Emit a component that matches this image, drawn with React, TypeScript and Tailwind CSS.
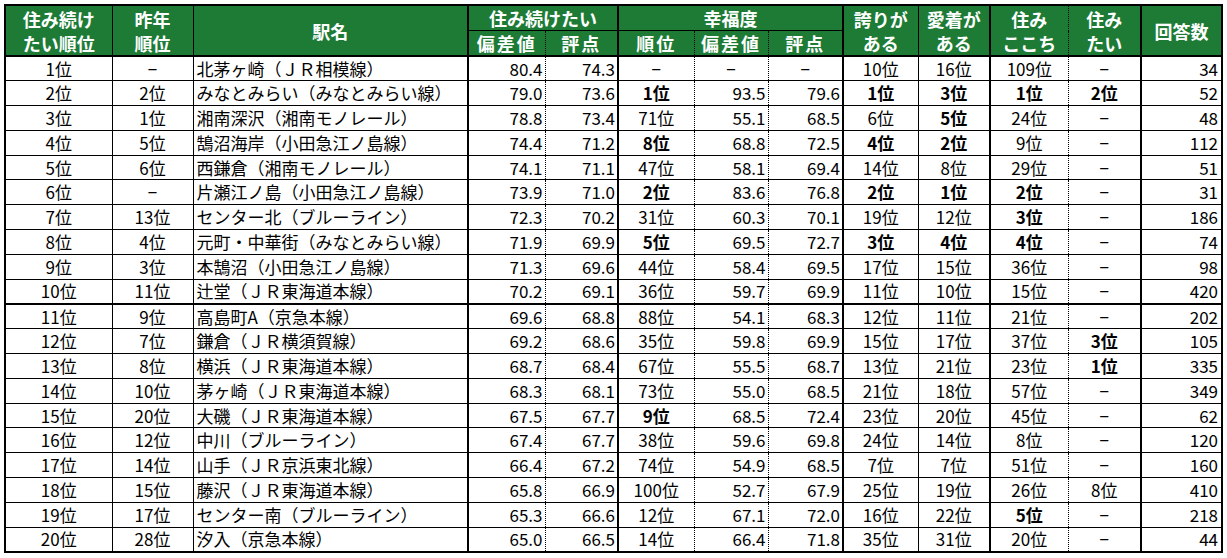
import React from 'react';

type Row = string[];

const D = '−';

// rank, last year, station, 住み続けたい(偏差値, 評点), 幸福度(順位, 偏差値, 評点), 誇り, 愛着, 住みここち, 住みたい, 回答数
const rows: Row[] = [
  ['1位', D, '北茅ヶ崎（ＪＲ相模線）', '80.4', '74.3', D, D, D, '10位', '16位', '109位', D, '34'],
  ['2位', '2位', 'みなとみらい（みなとみらい線）', '79.0', '73.6', '1位', '93.5', '79.6', '1位', '3位', '1位', '2位', '52'],
  ['3位', '1位', '湘南深沢（湘南モノレール）', '78.8', '73.4', '71位', '55.1', '68.5', '6位', '5位', '24位', D, '48'],
  ['4位', '5位', '鵠沼海岸（小田急江ノ島線）', '74.4', '71.2', '8位', '68.8', '72.5', '4位', '2位', '9位', D, '112'],
  ['5位', '6位', '西鎌倉（湘南モノレール）', '74.1', '71.1', '47位', '58.1', '69.4', '14位', '8位', '29位', D, '51'],
  ['6位', D, '片瀬江ノ島（小田急江ノ島線）', '73.9', '71.0', '2位', '83.6', '76.8', '2位', '1位', '2位', D, '31'],
  ['7位', '13位', 'センター北（ブルーライン）', '72.3', '70.2', '31位', '60.3', '70.1', '19位', '12位', '3位', D, '186'],
  ['8位', '4位', '元町・中華街（みなとみらい線）', '71.9', '69.9', '5位', '69.5', '72.7', '3位', '4位', '4位', D, '74'],
  ['9位', '3位', '本鵠沼（小田急江ノ島線）', '71.3', '69.6', '44位', '58.4', '69.5', '17位', '15位', '36位', D, '98'],
  ['10位', '11位', '辻堂（ＪＲ東海道本線）', '70.2', '69.1', '36位', '59.7', '69.9', '11位', '10位', '15位', D, '420'],
  ['11位', '9位', '高島町A（京急本線）', '69.6', '68.8', '88位', '54.1', '68.3', '12位', '11位', '21位', D, '202'],
  ['12位', '7位', '鎌倉（ＪＲ横須賀線）', '69.2', '68.6', '35位', '59.8', '69.9', '15位', '17位', '37位', '3位', '105'],
  ['13位', '8位', '横浜（ＪＲ東海道本線）', '68.7', '68.4', '67位', '55.5', '68.7', '13位', '21位', '23位', '1位', '335'],
  ['14位', '10位', '茅ヶ崎（ＪＲ東海道本線）', '68.3', '68.1', '73位', '55.0', '68.5', '21位', '18位', '57位', D, '349'],
  ['15位', '20位', '大磯（ＪＲ東海道本線）', '67.5', '67.7', '9位', '68.5', '72.4', '23位', '20位', '45位', D, '62'],
  ['16位', '12位', '中川（ブルーライン）', '67.4', '67.7', '38位', '59.6', '69.8', '24位', '14位', '8位', D, '120'],
  ['17位', '14位', '山手（ＪＲ京浜東北線）', '66.4', '67.2', '74位', '54.9', '68.5', '7位', '7位', '51位', D, '160'],
  ['18位', '15位', '藤沢（ＪＲ東海道本線）', '65.8', '66.9', '100位', '52.7', '67.9', '25位', '19位', '26位', '8位', '410'],
  ['19位', '17位', 'センター南（ブルーライン）', '65.3', '66.6', '12位', '67.1', '72.0', '16位', '22位', '5位', D, '218'],
  ['20位', '28位', '汐入（京急本線）', '65.0', '66.5', '14位', '66.4', '71.8', '35位', '31位', '20位', D, '44'],
];

const widths = [107, 81, 275, 77, 73, 76, 74, 75, 75, 72, 78, 73, 81];

// left border of every column
const leftBorder = [
  '',
  'border-l border-l-black',
  'border-l border-l-black',
  'border-l-2 border-l-black',
  'border-l border-l-black [border-left-style:dotted]',
  'border-l-2 border-l-black',
  'border-l border-l-black [border-left-style:dotted]',
  'border-l border-l-black [border-left-style:dotted]',
  'border-l-2 border-l-black',
  'border-l border-l-black',
  'border-l-2 border-l-black',
  'border-l border-l-black [border-left-style:dotted]',
  'border-l-2 border-l-black',
];

const align = [
  'text-center',
  'text-center',
  'text-left pl-[3px]',
  'text-right pr-[2px]',
  'text-right pr-[2px]',
  'text-center',
  'text-right pr-[2px]',
  'text-right pr-[2px]',
  'text-center',
  'text-center',
  'text-center',
  'text-center',
  'text-right pr-[3px]',
];

// rank columns where top places are printed bold
const isBold = (col: number, v: string) => {
  const n = parseInt(v, 10);
  if (Number.isNaN(n)) return false;
  if (col === 5) return n <= 10;
  if (col >= 8 && col <= 11) return n <= 5;
  return false;
};

const th = 'bg-[#1d7b36] text-white font-bold text-[18px] leading-[24px] align-middle text-center p-0';

export default function App() {
  return (
    <div className="bg-white w-[1227px] h-[558px] pt-[4px] pl-[4px] font-['Noto_Sans_CJK_JP','Noto_Sans',sans-serif]">
      <table className="table-fixed border-collapse border-2 border-black w-[1218px]">
        <colgroup>
          {widths.map((w, i) => (
            <col key={i} style={{ width: w }} />
          ))}
        </colgroup>
        <thead>
          <tr className="h-[25px]">
            <th rowSpan={2} className={th}>
              住み続け
              <br />
              たい順位
            </th>
            <th rowSpan={2} className={`${th} ${leftBorder[1]}`}>
              昨年
              <br />
              順位
            </th>
            <th rowSpan={2} className={`${th} ${leftBorder[2]}`}>
              駅名
            </th>
            <th colSpan={2} className={`${th} ${leftBorder[3]}`}>
              住み続けたい
            </th>
            <th colSpan={3} className={`${th} ${leftBorder[5]}`}>
              幸福度
            </th>
            <th rowSpan={2} className={`${th} ${leftBorder[8]}`}>
              誇りが
              <br />
              ある
            </th>
            <th rowSpan={2} className={`${th} ${leftBorder[9]}`}>
              愛着が
              <br />
              ある
            </th>
            <th rowSpan={2} className={`${th} ${leftBorder[10]}`}>
              住み
              <br />
              ここち
            </th>
            <th rowSpan={2} className={`${th} ${leftBorder[11]}`}>
              住み
              <br />
              たい
            </th>
            <th rowSpan={2} className={`${th} ${leftBorder[12]}`}>
              回答数
            </th>
          </tr>
          <tr className="h-[23px]">
            <th className={`${th} ${leftBorder[3]} border-t border-t-black tracking-[2px]`}>偏差値</th>
            <th className={`${th} ${leftBorder[4]} border-t border-t-black tracking-[2px]`}>評点</th>
            <th className={`${th} ${leftBorder[5]} border-t border-t-black tracking-[2px]`}>順位</th>
            <th className={`${th} ${leftBorder[6]} border-t border-t-black tracking-[2px]`}>偏差値</th>
            <th className={`${th} ${leftBorder[7]} border-t border-t-black tracking-[2px]`}>評点</th>
          </tr>
        </thead>
        <tbody>
          {rows.map((r, ri) => (
            <tr key={ri} className="h-[24.8px]">
              {r.map((v, ci) => (
                <td
                  key={ci}
                  className={`p-0 text-[17px] leading-[22px] text-black align-middle whitespace-nowrap ${leftBorder[ci]} ${
                    v === D ? 'text-center' : align[ci]
                  } ${ri === 0 || ri === 10 ? 'border-t-2 border-t-black' : 'border-t border-t-black'} ${
                    isBold(ci, v) ? 'font-bold' : 'font-normal'
                  }`}
                >
                  {v}
                </td>
              ))}
            </tr>
          ))}
        </tbody>
      </table>
    </div>
  );
}
